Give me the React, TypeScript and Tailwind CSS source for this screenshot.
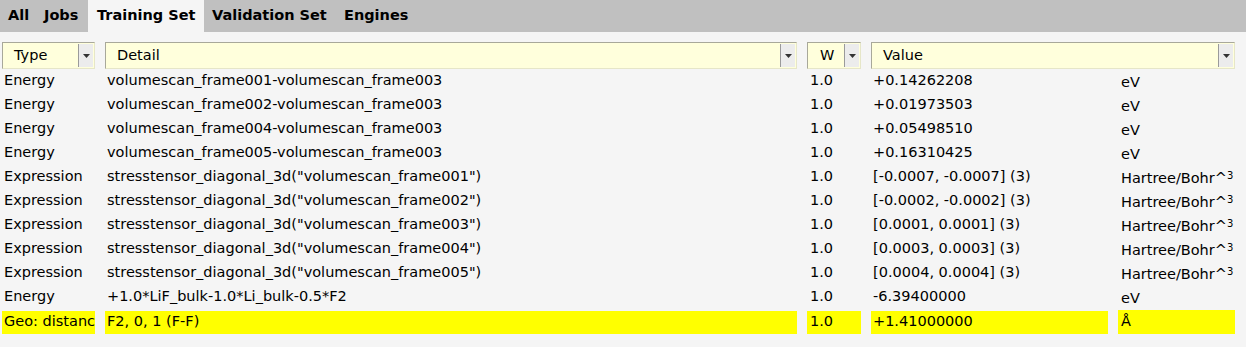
import React from 'react';

const rows: [string, string, string, string, string][] = [
  ['Energy', 'volumescan_frame001-volumescan_frame003', '1.0', '+0.14262208', 'eV'],
  ['Energy', 'volumescan_frame002-volumescan_frame003', '1.0', '+0.01973503', 'eV'],
  ['Energy', 'volumescan_frame004-volumescan_frame003', '1.0', '+0.05498510', 'eV'],
  ['Energy', 'volumescan_frame005-volumescan_frame003', '1.0', '+0.16310425', 'eV'],
  ['Expression', 'stresstensor_diagonal_3d("volumescan_frame001")', '1.0', '[-0.0007, -0.0007] (3)', 'Hartree/Bohr^3'],
  ['Expression', 'stresstensor_diagonal_3d("volumescan_frame002")', '1.0', '[-0.0002, -0.0002] (3)', 'Hartree/Bohr^3'],
  ['Expression', 'stresstensor_diagonal_3d("volumescan_frame003")', '1.0', '[0.0001, 0.0001] (3)', 'Hartree/Bohr^3'],
  ['Expression', 'stresstensor_diagonal_3d("volumescan_frame004")', '1.0', '[0.0003, 0.0003] (3)', 'Hartree/Bohr^3'],
  ['Expression', 'stresstensor_diagonal_3d("volumescan_frame005")', '1.0', '[0.0004, 0.0004] (3)', 'Hartree/Bohr^3'],
  ['Energy', '+1.0*LiF_bulk-1.0*Li_bulk-0.5*F2', '1.0', '-6.39400000', 'eV'],
];

function Unit({ u }: { u: string }) {
  if (u.endsWith('^3')) {
    return (
      <span>
        Hartree/Bohr^<span className="text-[10px] relative -top-[4px]">3</span>
      </span>
    );
  }
  return <span>{u}</span>;
}

function Combo({ label, pad = 'pl-[11px]' }: { label: string; pad?: string }) {
  return (
    <div className="flex h-[27px] bg-[#ffffdc] border-t border-l border-t-[#a8a89a] border-l-[#a8a89a] border-b border-r border-b-[#e6e6c8] border-r-[#e6e6c8]">
      <div className={`flex-1 flex items-center ${pad} overflow-hidden whitespace-nowrap`}>{label}</div>
      <div className="w-[15px] mr-[1px] my-[1px] bg-[#ececec] border-l border-l-[#9a9a9a] flex items-center justify-center">
        <svg width="7" height="4" viewBox="0 0 7 4">
          <path d="M0 0 L7 0 L3.5 4 Z" fill="#333" />
        </svg>
      </div>
    </div>
  );
}

export default function App() {
  return (
    <div className="w-[1246px] h-[347px] bg-[#f5f5f5] text-black overflow-hidden text-[14.5px]" style={{ fontFamily: '"DejaVu Sans", sans-serif' }}>
      <div className="flex h-[32px] bg-[#c0c0c0] font-bold items-stretch whitespace-nowrap">
        <div className="flex items-center w-[37px] pl-[8px]">All</div>
        <div className="flex items-center w-[51px] pl-[7px]">Jobs</div>
        <div className="flex items-center w-[116px] pl-[9px] bg-[#f5f5f5]">Training Set</div>
        <div className="flex items-center w-[132px] pl-[8px]">Validation Set</div>
        <div className="flex items-center pl-[8px]">Engines</div>
      </div>

      <div className="ml-[2px] mt-[10px] grid grid-cols-[93px_692px_54px_364px] gap-x-[10px]">
        <Combo label="Type" />
        <Combo label="Detail" />
        <Combo label="W" pad="pl-[12px]" />
        <Combo label="Value" />
      </div>

      <div className="ml-[2px] -mt-[1px]">
        {rows.map((r, i) => (
          <div key={i} className="grid grid-cols-[93px_692px_54px_237px_117px] gap-x-[10px] h-[24px] items-center whitespace-nowrap">
            <div className="pl-[2px] overflow-hidden">{r[0]}</div>
            <div className="pl-[2px]">{r[1]}</div>
            <div className="pl-[3px]">{r[2]}</div>
            <div className="pl-[2px]">{r[3]}</div>
            <div className="pl-[3px] pt-[4px]"><Unit u={r[4]} /></div>
          </div>
        ))}
        <div className="grid grid-cols-[93px_692px_54px_237px_117px] gap-x-[10px] h-[24px] items-center whitespace-nowrap">
          <div className="h-[23px] mt-[2px] bg-[#ffff00] pl-[2px] overflow-hidden flex items-center">Geo: distanc</div>
          <div className="h-[23px] mt-[2px] bg-[#ffff00] pl-[2px] flex items-center">F2, 0, 1 (F-F)</div>
          <div className="h-[23px] mt-[2px] bg-[#ffff00] pl-[3px] flex items-center">1.0</div>
          <div className="h-[23px] mt-[2px] bg-[#ffff00] pl-[2px] flex items-center">+1.41000000</div>
          <div className="h-[24px] mt-[2px] bg-[#ffff00] pl-[3px] flex items-center">Å</div>
        </div>
      </div>
    </div>
  );
}
